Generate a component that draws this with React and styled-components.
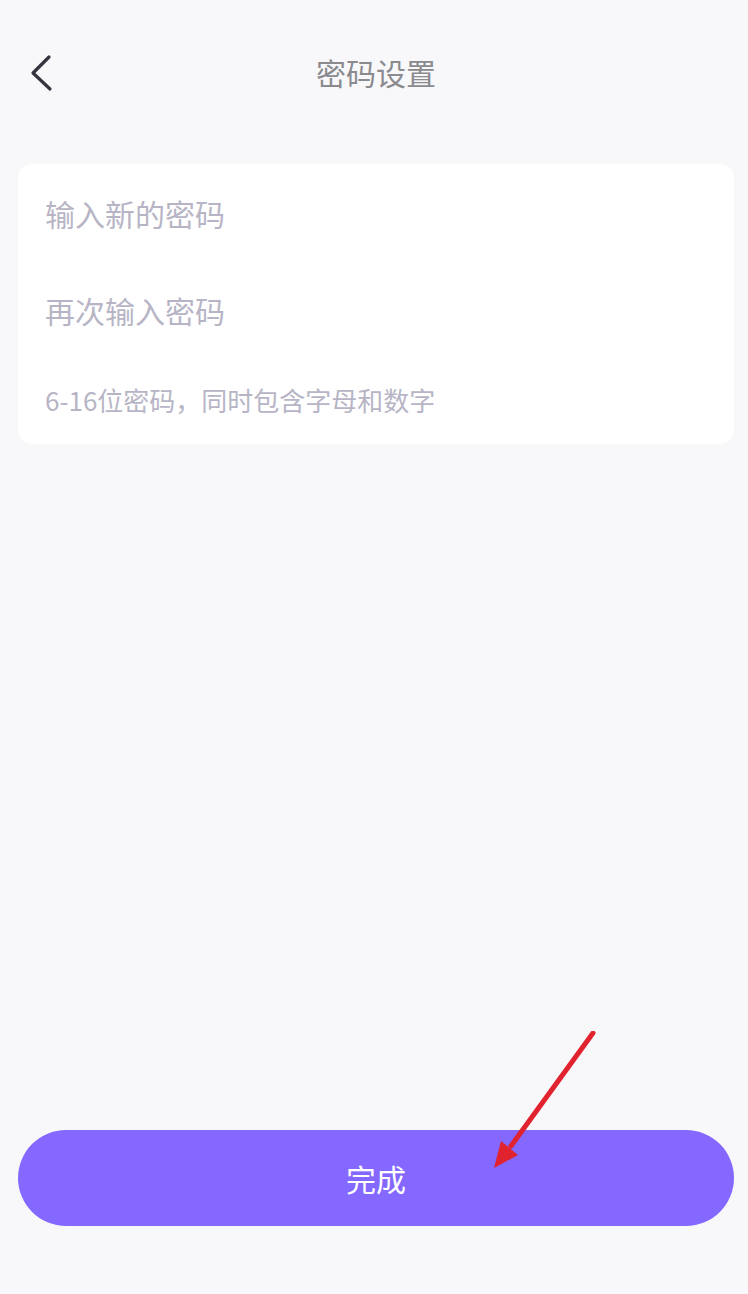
import React from "react";
import styled, { createGlobalStyle } from "styled-components";

const GlobalStyle = createGlobalStyle`
  html, body {
    margin: 0;
    padding: 0;
    background: #f8f8fb;
  }
  body {
    font-family: "Noto Sans CJK SC", "Noto Sans", sans-serif;
  }
  input::placeholder {
    color: #b7b5c5;
  }
`;

const App = () => {
  return (
    <Page>
      <GlobalStyle />
      <Header>
        <BackButton aria-label="返回">
          <svg width="24" height="38" viewBox="0 0 24 38">
            <path
              d="M19 3 L3 19 L20 35"
              fill="none"
              stroke="#35343f"
              strokeWidth="3.2"
              strokeLinecap="round"
              strokeLinejoin="round"
            />
          </svg>
        </BackButton>
        <Title>密码设置</Title>
      </Header>

      <Card>
        <Field>
          <Input type="password" placeholder="输入新的密码" />
        </Field>
        <Field>
          <Input type="password" placeholder="再次输入密码" />
        </Field>
        <Hint>6-16位密码，同时包含字母和数字</Hint>
      </Card>

      <Spacer />

      <Footer>
        <SubmitButton>完成</SubmitButton>
        {/* 标注箭头 */}
        <Annotation width="120" height="150" viewBox="0 0 120 150">
          <line x1="112" y1="2" x2="30" y2="115" stroke="#e0232e" strokeWidth="5" strokeLinecap="round" />
          <polygon points="13,137 20,110 37,124" fill="#e0232e" />
        </Annotation>
      </Footer>
    </Page>
  );
};

export default App;

const Page = styled.div`
  min-height: 1294px;
  display: flex;
  flex-direction: column;
  background: #f8f8fb;
`;

const Header = styled.div`
  position: relative;
  height: 148px;
  display: flex;
  align-items: flex-start;
  justify-content: center;
  padding-top: 50px;
  box-sizing: border-box;
`;

const BackButton = styled.button`
  position: absolute;
  left: 30px;
  top: 54px;
  padding: 0;
  border: none;
  background: none;
  cursor: pointer;
`;

const Title = styled.h1`
  margin: 0 0 0 4px;
  font-size: 30px;
  line-height: 44px;
  font-weight: 400;
  color: #8a8a8f;
`;

const Card = styled.div`
  margin: 16px 14px 0 18px;
  padding: 0 27px 26px;
  background: #ffffff;
  border-radius: 14px;
`;

const Field = styled.div`
  height: 97px;
  display: flex;
  align-items: center;
`;

const Input = styled.input`
  width: 100%;
  border: none;
  outline: none;
  background: transparent;
  padding: 0;
  font-family: "Noto Sans CJK SC", "Noto Sans", sans-serif;
  font-size: 30px;
  color: #333;
`;

const Hint = styled.p`
  margin: 24px 0 0;
  font-size: 26px;
  line-height: 36px;
  color: #b7b5c5;
`;

const Spacer = styled.div`
  flex: 1;
`;

const Footer = styled.div`
  position: relative;
  padding: 0 14px 68px 18px;
`;

const SubmitButton = styled.button`
  width: 100%;
  height: 96px;
  border: none;
  border-radius: 48px;
  background: #8468ff;
  color: #ffffff;
  font-family: "Noto Sans CJK SC", "Noto Sans", sans-serif;
  font-size: 30px;
  cursor: pointer;
`;

const Annotation = styled.svg`
  position: absolute;
  left: 481px;
  top: -99px;
  pointer-events: none;
`;
